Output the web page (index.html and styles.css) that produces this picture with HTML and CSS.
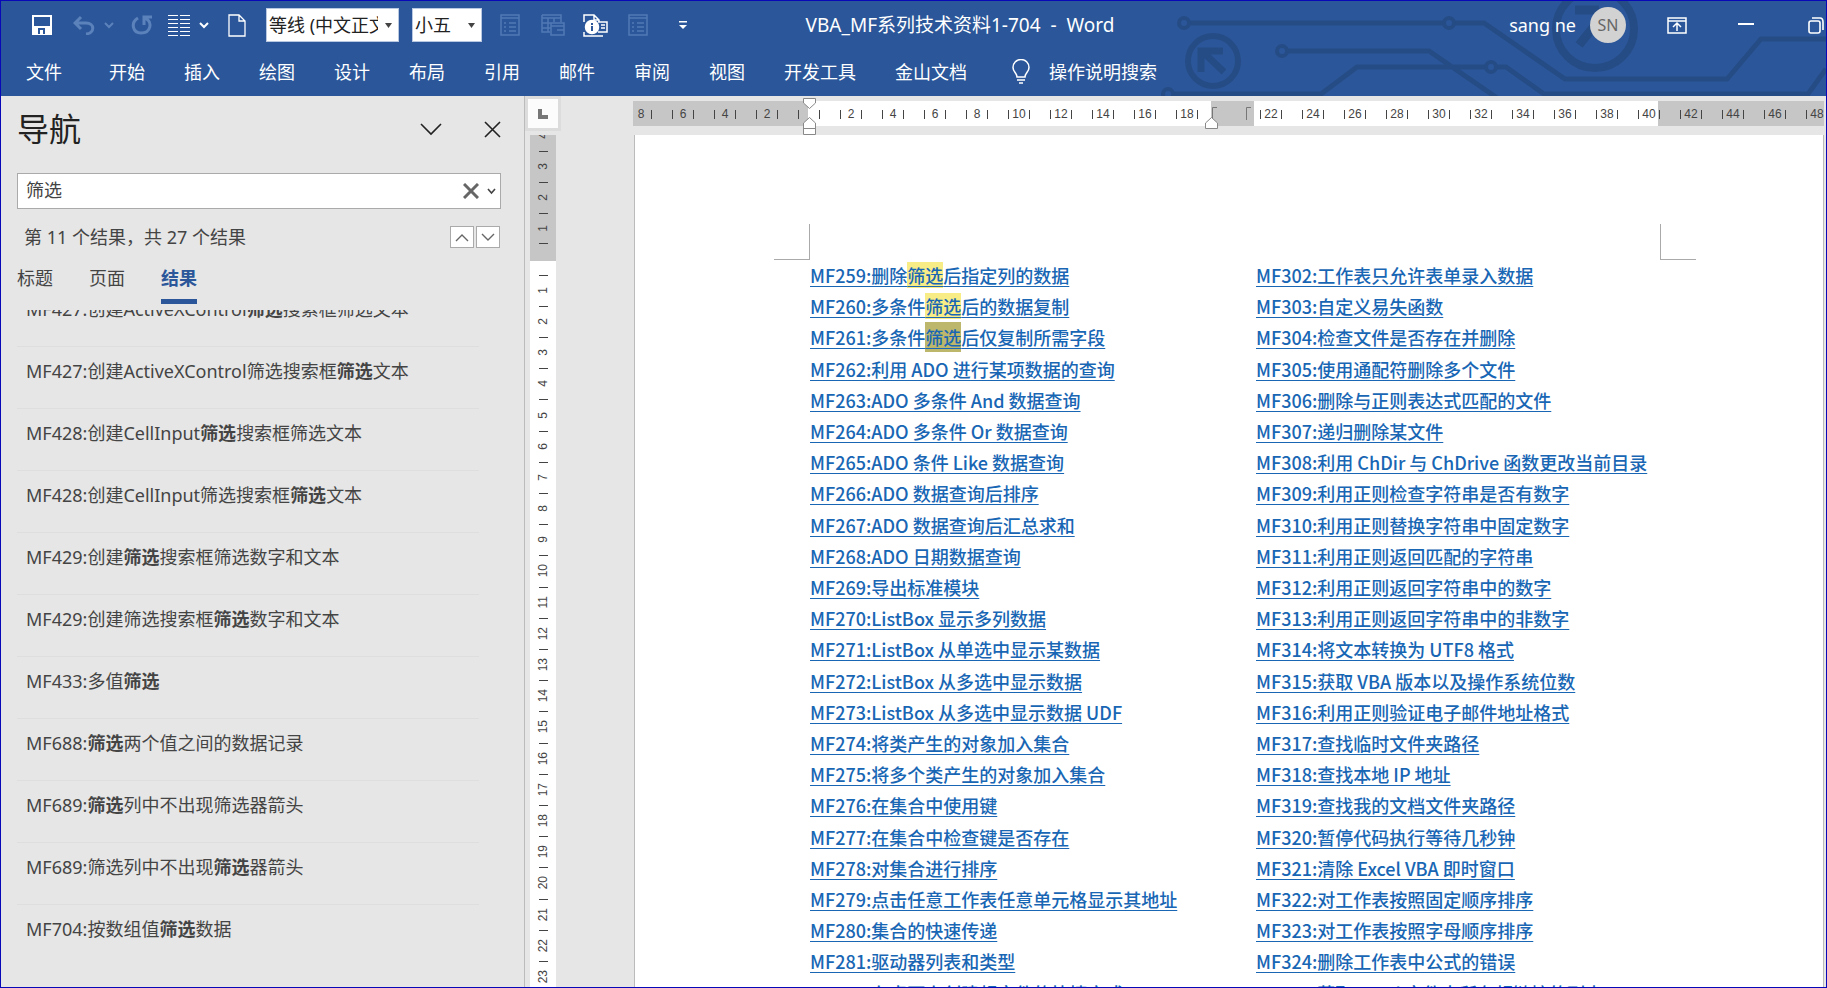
FILE: index.html
```html
<!DOCTYPE html>
<html lang="zh-CN">
<head>
<meta charset="utf-8">
<title>VBA_MF系列技术资料1-704 - Word</title>
<link rel="stylesheet" href="styles.css">
</head>
<body>
<div class="window">
  <header class="header">
    <svg class="circuit" width="667" height="96" viewBox="0 0 667 96" fill="none" stroke="#264c86" stroke-width="5" aria-hidden="true">
      <path d="M31 22H284M296 22H325L406 78H568L602 38H667M129 50H270L357 110M15 93H162L198 66H327M338 66H347L385 93H649L667 68"/>
      <circle cx="25" cy="22" r="5" stroke-width="4"/><circle cx="290" cy="22" r="5" stroke-width="4"/>
      <circle cx="123" cy="50" r="5" stroke-width="4"/><circle cx="332" cy="66" r="5" stroke-width="4"/>
      <circle cx="9" cy="93" r="5" stroke-width="4"/>
      <circle cx="54" cy="60" r="25" stroke-width="6"/><path d="M42 71V50H64M44 51L65 71" stroke-width="7"/>
      <circle cx="436" cy="28" r="39" stroke-width="8"/><path d="M416 9H440M449 8L420 44" stroke-width="9"/>
    </svg>
    <div class="titlebar">
      <div class="quick">
        <button class="ico" aria-label="保存"><svg width="20" height="20" fill="none" stroke="#fff" stroke-width="2"><path d="M1 1H19V19H1Z"/><path d="M2 12H18V18H2Z" fill="#fff"/><path d="M7 19V14H12V19" stroke="#2b579a"/></svg></button>
        <button class="ico undo" aria-label="撤消"><svg width="22" height="20" fill="none" stroke="#5c82bb" stroke-width="3"><path d="M8 2L2 8L8 14M2 8H13C22 8 22 18 13 19"/></svg></button>
        <button class="ico tiny-caret" aria-label="撤消选项"><svg width="10" height="8" fill="none" stroke="#5c82bb" stroke-width="2"><path d="M1 2L5 6L9 2"/></svg></button>
        <button class="ico redo" aria-label="重复"><svg width="22" height="20" fill="none" stroke="#5c82bb" stroke-width="3"><path d="M7 3C-1 8 2 18 10 18C20 18 22 7 14 3M13 10V2H21"/></svg></button>
        <button class="ico lines" aria-label="行距"><svg width="22" height="22" stroke="#fff" stroke-width="1"><path d="M0 1.500H10M12 1.500H22M0 5.500H10M12 5.500H22M0 9.500H10M12 9.500H22M0 13.500H10M12 13.500H22M0 17.500H10M12 17.500H22M0 21.500H10M12 21.500H22"/></svg></button>
        <button class="ico tiny-caret" aria-label="行距选项"><svg width="10" height="8" fill="none" stroke="#fff" stroke-width="2"><path d="M1 2L5 6L9 2"/></svg></button>
        <button class="ico newdoc" aria-label="新建"><svg width="18" height="23" fill="none" stroke="#fff" stroke-width="1.300"><path d="M1 1H11L17 7V22H1ZM11 1V7H17"/></svg></button>
        <select class="combo font" aria-label="字体"><option>等线 (中文正文)</option></select>
        <select class="combo size" aria-label="字号"><option>小五</option></select>
        <button class="ico form" aria-label="窗体"><svg width="20" height="22" fill="none" stroke="#5079b5" stroke-width="1.500"><path d="M1 1H19V21H1ZM1 4H19M4 9H6M9 9H16M4 13H6M9 13H16M4 17H6M9 17H16"/></svg></button>
        <button class="ico table" aria-label="表格"><svg width="24" height="22" fill="none" stroke="#5079b5" stroke-width="1.500"><path d="M1 1H20V8M1 4H20M1 9H12M1 14H10M1 1V18H9M7 4V18M13 4V8M10 9H23V21H10ZM10 12H23M16 16H23"/></svg></button>
        <button class="ico info" aria-label="文档信息"><svg width="25" height="23" fill="none" stroke="#fff" stroke-width="1.500"><path d="M1 8V1H11L16 6V8M11 1V6H16M1 18V22H20M15 8H24V18H15M18 11H22M18 14H22"/><circle cx="9" cy="13" r="6.500" fill="#fff"/><path d="M9 9V11M9 12V17" stroke="#2b579a" stroke-width="2"/></svg></button>
        <button class="ico props" aria-label="属性"><svg width="20" height="22" fill="none" stroke="#5079b5" stroke-width="1.500"><path d="M1 1H19V21H1ZM1 4H19M4 9H6M9 9H16M4 13H6M9 13H16M4 17H6M9 17H16"/></svg></button>
        <button class="ico more" aria-label="自定义快速访问工具栏"><svg width="8" height="8" fill="#fff"><path d="M0 0H8V1.500H0ZM0 4H8L4 8Z"/></svg></button>
      </div>
      <h1 class="doc-title">VBA_MF系列技术资料1-704&nbsp; -&nbsp; Word</h1>
      <div class="account">
        <span class="user">sang ne</span>
        <span class="avatar">SN</span>
        <button class="ico ribbon-toggle" aria-label="功能区显示选项"><svg width="20" height="17" fill="none" stroke="#fff" stroke-width="1.500"><path d="M1 1H19V16H1ZM1 4H19M10 14V7M6 10L10 6L14 10" /></svg></button>
        <button class="ico minimize" aria-label="最小化"><svg width="16" height="17" stroke="#fff" stroke-width="2"><path d="M0 7H16"/></svg></button>
        <button class="ico" aria-label="还原"><svg width="16" height="17" fill="none" stroke="#fff" stroke-width="1.600"><rect x="1" y="4" width="11" height="12" rx="2"/><path d="M4 1H12Q15 1 15 5V13"/></svg></button>
      </div>
    </div>
    <nav class="tabs">
      <button class="tab file">文件</button><button class="tab">开始</button><button class="tab">插入</button><button class="tab">绘图</button><button class="tab">设计</button><button class="tab">布局</button><button class="tab">引用</button><button class="tab">邮件</button><button class="tab">审阅</button><button class="tab">视图</button><button class="tab">开发工具</button><button class="tab">金山文档</button>
      <button class="tab tell"><svg width="18" height="25" fill="none" stroke="#fff" stroke-width="1.500"><path d="M5 18C5 14 1 13 1 8.500A8 8 0 0 1 17 8.500C17 13 13 14 13 18ZM5 21H13M7 24H11"/></svg>操作说明搜索</button>
    </nav>
  </header>
  <div class="workspace">
    <aside class="pane">
      <div class="pane-head">
        <h2 class="pane-title">导航</h2>
        <button class="ico pane-menu" aria-label="任务窗格选项"><svg width="22" height="13" fill="none" stroke="#222" stroke-width="1.600"><path d="M1 1L11 11L21 1"/></svg></button>
        <button class="ico" aria-label="关闭"><svg width="17" height="17" fill="none" stroke="#222" stroke-width="1.600"><path d="M1 1L16 16M16 1L1 16"/></svg></button>
      </div>
      <div class="search">
        <input class="search-input" type="text" value="筛选" aria-label="搜索文档">
        <button class="ico" aria-label="清除"><svg width="16" height="16" fill="none" stroke="#666" stroke-width="3"><path d="M1 1L15 15M15 1L1 15"/></svg></button>
        <button class="ico" aria-label="搜索选项"><svg width="9" height="7" fill="none" stroke="#444" stroke-width="1.600"><path d="M1 1L4.500 5L8 1"/></svg></button>
      </div>
      <div class="status">
        <span class="count">第 11 个结果，共 27 个结果</span>
        <button class="step" aria-label="上一个"><svg width="14" height="9" fill="none" stroke="#666" stroke-width="1.400"><path d="M1 8L7 2L13 8"/></svg></button>
        <button class="step" aria-label="下一个"><svg width="14" height="9" fill="none" stroke="#666" stroke-width="1.400"><path d="M1 1L7 7L13 1"/></svg></button>
      </div>
      <div class="views">
        <button class="view">标题</button><button class="view">页面</button><button class="view active">结果</button>
      </div>
      <div class="results">
        <ul class="result-list">
          <li class="result">MF427:创建ActiveXControl<b>筛选</b>搜索框筛选文本</li>
          <li class="result">MF427:创建ActiveXControl筛选搜索框<b>筛选</b>文本</li>
          <li class="result">MF428:创建CellInput<b>筛选</b>搜索框筛选文本</li>
          <li class="result">MF428:创建CellInput筛选搜索框<b>筛选</b>文本</li>
          <li class="result">MF429:创建<b>筛选</b>搜索框筛选数字和文本</li>
          <li class="result">MF429:创建筛选搜索框<b>筛选</b>数字和文本</li>
          <li class="result">MF433:多值<b>筛选</b></li>
          <li class="result">MF688:<b>筛选</b>两个值之间的数据记录</li>
          <li class="result">MF689:<b>筛选</b>列中不出现筛选器箭头</li>
          <li class="result">MF689:筛选列中不出现<b>筛选</b>器箭头</li>
          <li class="result">MF704:按数组值<b>筛选</b>数据</li>
        </ul>
      </div>
    </aside>
    <div class="side">
      <button class="tabstop" aria-label="制表符"><svg width="10" height="10" fill="none" stroke="#777" stroke-width="4"><path d="M2 0V8H10"/></svg></button>
      <div class="vruler">
        <div class="vtop"><span>4</span><span>3</span><span>2</span><span>1</span></div>
        <div class="vmain"><span>1</span><span>2</span><span>3</span><span>4</span><span>5</span><span>6</span><span>7</span><span>8</span><span>9</span><span>10</span><span>11</span><span>12</span><span>13</span><span>14</span><span>15</span><span>16</span><span>17</span><span>18</span><span>19</span><span>20</span><span>21</span><span>22</span><span>23</span></div>
      </div>
    </div>
    <main class="editor">
      <div class="hruler">
        <div class="hcells"><span>8</span><span>6</span><span>4</span><span>2</span><span></span><span>2</span><span>4</span><span>6</span><span>8</span><span>10</span><span>12</span><span>14</span><span>16</span><span>18</span><span class="gap"></span><span>22</span><span>24</span><span>26</span><span>28</span><span>30</span><span>32</span><span>34</span><span>36</span><span>38</span><span>40</span><span>42</span><span>44</span><span>46</span><span>48</span></div>
        <svg class="marks" width="460" height="38" fill="#fff" stroke="#888" aria-hidden="true"><path d="M1.500 1.500H13.500V6L7.500 11.500L1.500 6ZM1.500 37.500V26L7.500 20.500L13.500 26V37.500ZM1.500 31.500H13.500"/><path d="M410.500 26V10.500H415M444.500 23V10.500H449" fill="none" stroke="#777"/><path d="M403.500 31.500V26L409.500 20.500L415.500 26V31.500Z"/></svg>
      </div>
      <article class="page">
        <div class="crops"><i class="crop left"></i><i class="crop right"></i></div>
        <div class="columns">
          <ul class="links">
            <li><a href="#">MF259:删除<mark>筛选</mark>后指定列的数据</a></li>
            <li><a href="#">MF260:多条件<mark>筛选</mark>后的数据复制</a></li>
            <li><a href="#">MF261:多条件<mark class="current">筛选</mark>后仅复制所需字段</a></li>
            <li><a href="#">MF262:利用 ADO 进行某项数据的查询</a></li>
            <li><a href="#">MF263:ADO 多条件 And 数据查询</a></li>
            <li><a href="#">MF264:ADO 多条件 Or 数据查询</a></li>
            <li><a href="#">MF265:ADO 条件 Like 数据查询</a></li>
            <li><a href="#">MF266:ADO 数据查询后排序</a></li>
            <li><a href="#">MF267:ADO 数据查询后汇总求和</a></li>
            <li><a href="#">MF268:ADO 日期数据查询</a></li>
            <li><a href="#">MF269:导出标准模块</a></li>
            <li><a href="#">MF270:ListBox 显示多列数据</a></li>
            <li><a href="#">MF271:ListBox 从单选中显示某数据</a></li>
            <li><a href="#">MF272:ListBox 从多选中显示数据</a></li>
            <li><a href="#">MF273:ListBox 从多选中显示数据 UDF</a></li>
            <li><a href="#">MF274:将类产生的对象加入集合</a></li>
            <li><a href="#">MF275:将多个类产生的对象加入集合</a></li>
            <li><a href="#">MF276:在集合中使用键</a></li>
            <li><a href="#">MF277:在集合中检查键是否存在</a></li>
            <li><a href="#">MF278:对集合进行排序</a></li>
            <li><a href="#">MF279:点击任意工作表任意单元格显示其地址</a></li>
            <li><a href="#">MF280:集合的快速传递</a></li>
            <li><a href="#">MF281:驱动器列表和类型</a></li>
            <li><a href="#">MF282:在桌面上创建超文件的快捷方式</a></li>
          </ul>
          <ul class="links">
            <li><a href="#">MF302:工作表只允许表单录入数据</a></li>
            <li><a href="#">MF303:自定义易失函数</a></li>
            <li><a href="#">MF304:检查文件是否存在并删除</a></li>
            <li><a href="#">MF305:使用通配符删除多个文件</a></li>
            <li><a href="#">MF306:删除与正则表达式匹配的文件</a></li>
            <li><a href="#">MF307:递归删除某文件</a></li>
            <li><a href="#">MF308:利用 ChDir 与 ChDrive 函数更改当前目录</a></li>
            <li><a href="#">MF309:利用正则检查字符串是否有数字</a></li>
            <li><a href="#">MF310:利用正则替换字符串中固定数字</a></li>
            <li><a href="#">MF311:利用正则返回匹配的字符串</a></li>
            <li><a href="#">MF312:利用正则返回字符串中的数字</a></li>
            <li><a href="#">MF313:利用正则返回字符串中的非数字</a></li>
            <li><a href="#">MF314:将文本转换为 UTF8 格式</a></li>
            <li><a href="#">MF315:获取 VBA 版本以及操作系统位数</a></li>
            <li><a href="#">MF316:利用正则验证电子邮件地址格式</a></li>
            <li><a href="#">MF317:查找临时文件夹路径</a></li>
            <li><a href="#">MF318:查找本地 IP 地址</a></li>
            <li><a href="#">MF319:查找我的文档文件夹路径</a></li>
            <li><a href="#">MF320:暂停代码执行等待几秒钟</a></li>
            <li><a href="#">MF321:清除 Excel VBA 即时窗口</a></li>
            <li><a href="#">MF322:对工作表按照固定顺序排序</a></li>
            <li><a href="#">MF323:对工作表按照字母顺序排序</a></li>
            <li><a href="#">MF324:删除工作表中公式的错误</a></li>
            <li><a href="#">MF325:获取 Excel 文件中所有超链接的列表</a></li>
          </ul>
        </div>
      </article>
    </main>
  </div>
</div>
</body>
</html>
```
FILE: styles.css
```css
* { box-sizing: border-box; }
body { margin: 0; font: 18px/24px "Noto Sans", "Noto Sans CJK SC", sans-serif; color: #444; }
ul { list-style: none; margin: 0; padding: 0; }
h1, h2 { margin: 0; font-weight: 400; }
button, input, select { font: inherit; color: inherit; }
button { padding: 0; border: 0; background: none; }
svg { display: block; }
.window { height: 100vh; display: flex; flex-direction: column; overflow: hidden; border: 1px solid #0808b8; background: #e6e6e6; }

.header { position: relative; flex: none; height: 95px; background: #2b579a; color: #fff; overflow: hidden; }
.circuit { position: absolute; top: 0; right: 0; }
.titlebar { position: relative; display: grid; grid-template-columns: 1fr auto 1fr; align-items: center; height: 48px; padding-left: 31px; }
.quick { display: flex; align-items: center; }
.ico { flex: none; }
.undo { margin-left: 21px; }
.tiny-caret { margin-left: 9px; }
.redo { margin-left: 17px; }
.lines { margin-left: 15px; }
.newdoc { margin-left: 19px; }
.combo { flex: none; appearance: none; height: 34px; padding: 0 20px 0 2px; border: 1px solid #b8c8e0; border-radius: 0; color: #222; background: #fff url("data:image/svg+xml,%3Csvg xmlns='http://www.w3.org/2000/svg' width='7' height='5'%3E%3Cpath d='M0 0H7L3.500 5Z' fill='%23444'/%3E%3C/svg%3E") no-repeat right 6px center; }
.font { width: 133px; margin-left: 20px; }
.size { width: 70px; margin-left: 13px; }
.form { margin-left: 18px; }
.table { margin-left: 21px; }
.info { margin-left: 18px; }
.props { margin-left: 20px; }
.more { margin-left: 31px; }
.doc-title { padding-left: 62px; font-size: 19px; line-height: 24px; white-space: nowrap; }
.account { display: flex; align-items: center; justify-content: flex-end; padding-right: 2px; }
.avatar { width: 36px; height: 36px; margin-left: 14px; border-radius: 50%; background: #d2d2d2; color: #666; font-size: 16px; line-height: 36px; text-align: center; }
.ribbon-toggle { margin-left: 41px; }
.minimize { margin: 0 54px 0 51px; }
.tabs { position: relative; display: flex; align-items: center; gap: 39px; height: 47px; padding: 0 0 2px 25px; }
.tab { white-space: nowrap; }
.file { margin-right: 8px; }
.tell { display: flex; align-items: center; gap: 19px; margin-left: 6px; }

.workspace { flex: 1; min-height: 0; display: flex; }
.pane { flex: none; width: 524px; display: flex; flex-direction: column; padding: 0 23px 0 16px; border-right: 1px solid #bbb; }
.pane-head { display: flex; align-items: center; height: 77px; padding: 0 0 11px; }
.pane-title { flex: 1; font-size: 32px; line-height: 40px; color: #222; }
.pane-menu { margin-right: 42px; }
.search { display: flex; align-items: center; gap: 8px; height: 36px; padding: 0 4px 0 8px; border: 1px solid #aaa; background: #fff; }
.search-input { flex: 1; min-width: 0; padding: 0 0 3px; border: 0; outline: 0; background: none; }
.status { display: flex; align-items: center; gap: 2px; margin-top: 16px; padding: 0 1px 0 7px; }
.count { flex: 1; }
.step { display: grid; place-items: center; width: 24px; height: 22px; border: 1px solid #aaa; background: #fff; }
.views { display: flex; gap: 36px; margin-top: 17px; }
.view { height: 38px; padding-bottom: 10px; border-bottom: 5px solid transparent; }
.active { border-color: #2b579a; color: #2b579a; font-weight: 700; }
.results { flex: 1; min-height: 0; margin-top: 6px; overflow: hidden; }
.result-list { margin-top: -25px; }
.result { height: 62px; margin-right: 22px; padding: 12px 0 0 9px; border-bottom: 1px solid #dedede; white-space: nowrap; }
.result:last-child { border-color: transparent; }

.side { flex: none; width: 32px; display: flex; flex-direction: column; padding: 3px 0 0 3px; }
.tabstop { display: grid; place-items: center; flex: none; width: 30px; height: 29px; background: #fcfcfc; box-shadow: 0 0 0 3px #dcdcdc; }
.vruler { flex: 1; min-height: 0; display: flex; flex-direction: column; width: 26px; margin: 7px 0 0 2px; font: 12px/26px "Liberation Sans", sans-serif; overflow: hidden; }
.vtop, .vmain { flex: none; }
.vtop { height: 126px; background: #c6c6c6; display: flex; flex-direction: column; justify-content: flex-end; padding-bottom: 17px; overflow: hidden; }
.vmain { background: #fff; padding-top: 14px; }
.vruler span { display: flex; flex: none; align-items: center; justify-content: center; height: 31px; writing-mode: sideways-lr; background: linear-gradient(#444, #444) no-repeat center top / 9px 1px; }
.vtop span:last-child { background: linear-gradient(#444, #444) no-repeat center top / 9px 1px, linear-gradient(#444, #444) no-repeat center bottom / 9px 1px; }
.vmain span:nth-child(5n) { height: 32px; }

.editor { flex: 1; min-width: 0; display: flex; flex-direction: column; padding: 5px 2px 0 76px; }
.hruler { position: relative; flex: none; height: 25px; background: linear-gradient(90deg, #c6c6c6 175px, #fff 175px, #fff 578px, #c6c6c6 578px, #c6c6c6 621px, #fff 621px, #fff 1025px, #c6c6c6 1025px); }
.hcells { display: flex; height: 25px; overflow: hidden; font: 12px/27px "Liberation Sans", sans-serif; }
.hcells span { flex: none; width: 42px; text-align: center; background: linear-gradient(#444, #444) no-repeat 10px 9px / 1px 9px, linear-gradient(#444, #444) no-repeat 31px 9px / 1px 9px; }
.hcells span:first-child { margin-left: -13px; }
.hcells .gap { background: none; }
.marks { position: absolute; left: 169px; top: -4px; }
.page { flex: 1; min-height: 0; margin: 9px 0 0 1px; padding: 89px 127px 0 139px; border: solid #bbb; border-width: 0 1px; background: #fff; overflow: hidden; }
.crops { display: flex; justify-content: space-between; }
.crop { width: 36px; height: 36px; border: 0 solid #aaa; border-width: 0 1px 1px 0; }
.right { border-width: 0 0 1px 1px; }
.columns { display: grid; grid-template-columns: 446px 1fr; padding: 0 0 0 36px; }
.links { font: 500 18px/30px "Noto Sans CJK SC Medium", "Noto Sans CJK SC", sans-serif; white-space: nowrap; }
.links li { height: 31px; }
.links li:nth-child(5n+3) { height: 32px; }
.links a { color: #1866b4; text-decoration: underline 1px; text-underline-offset: 3px; text-decoration-skip-ink: none; }
mark { color: inherit; background: #f7ec86; }
.current { padding: 2px 0; background: #bdb76b; }
```
